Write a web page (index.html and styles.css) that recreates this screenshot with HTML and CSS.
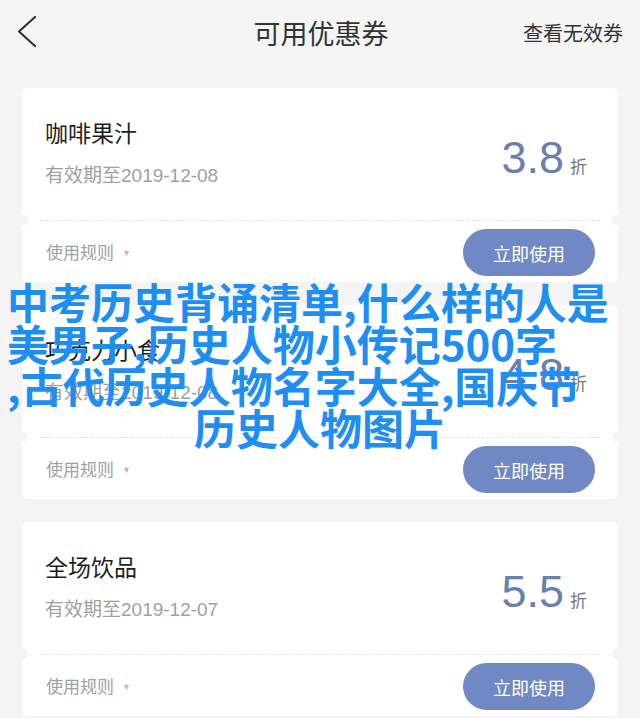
FILE: index.html
```html
<!DOCTYPE html>
<html lang="zh-CN">
<head>
  <meta charset="UTF-8" />
  <meta name="viewport" content="width=device-width, initial-scale=1.0"/>
  <title>可用优惠券</title>
  <link rel="stylesheet" href="styles.css">
</head>
<body>
  <header class="topbar">
    <a class="back" href="#">
      <svg width="20" height="32" viewBox="0 0 20 32"><polyline points="18,1 2,15.5 18,30" fill="none" stroke="#333" stroke-width="2.2" stroke-linecap="round" stroke-linejoin="round"/></svg>
    </a>
    <h1 class="title">可用优惠券</h1>
    <a class="invalid" href="#">查看无效券</a>
  </header>

  <main class="coupons">
    <div class="coupon">
      <div class="coupon-top">
        <div class="coupon-info">
          <h2 class="coupon-name">咖啡果汁</h2>
          <p class="coupon-date">有效期至2019-12-08</p>
        </div>
        <div class="coupon-rate"><span class="rate-num">3.8</span><span class="rate-unit">折</span></div>
      </div>
      <div class="coupon-line"></div>
      <div class="coupon-bottom">
        <span class="rule">使用规则<i class="arrow">▼</i></span>
        <button class="use-btn">立即使用</button>
      </div>
    </div>

    <div class="coupon">
      <div class="coupon-top">
        <div class="coupon-info">
          <h2 class="coupon-name">巧克力小食</h2>
          <p class="coupon-date">有效期至2019-12-08</p>
        </div>
        <div class="coupon-rate"><span class="rate-num">4.8</span><span class="rate-unit">折</span></div>
      </div>
      <div class="coupon-line"></div>
      <div class="coupon-bottom">
        <span class="rule">使用规则<i class="arrow">▼</i></span>
        <button class="use-btn">立即使用</button>
      </div>
    </div>

    <div class="coupon">
      <div class="coupon-top">
        <div class="coupon-info">
          <h2 class="coupon-name">全场饮品</h2>
          <p class="coupon-date">有效期至2019-12-07</p>
        </div>
        <div class="coupon-rate"><span class="rate-num">5.5</span><span class="rate-unit">折</span></div>
      </div>
      <div class="coupon-line"></div>
      <div class="coupon-bottom">
        <span class="rule">使用规则<i class="arrow">▼</i></span>
        <button class="use-btn">立即使用</button>
      </div>
    </div>
  </main>

  <div class="watermark">
    <div class="wm-line">中考历史背诵清单,什么样的人是</div>
    <div class="wm-line">美男子,历史人物小传记500字</div>
    <div class="wm-line">,古代历史人物名字大全,国庆节</div>
    <div class="wm-line wm-center">历史人物图片</div>
  </div>
</body>
</html>
```

FILE: styles.css
```css
* {margin: 0; padding: 0; box-sizing: border-box;}
body {
  background: #f4f4f4;
  font-family: "Liberation Sans", "Noto Sans CJK SC", sans-serif;
  color: #333;
  position: relative;
  min-height: 718px;
}
.topbar {
  height: 64px;
  padding: 0 17px 0 17px;
  display: grid;
  grid-template-columns: 1fr auto 1fr;
  align-items: center;
}
.back {
  display: flex;
  align-items: center;
}
.title {
  font-size: 27px;
  font-weight: normal;
  color: #333;
  padding-left: 2px;
}
.invalid {
  justify-self: end;
  font-size: 20px;
  color: #333;
  text-decoration: none;
}
.coupons {
  padding: 24px 22px 0;
  display: flex;
  flex-direction: column;
  gap: 23px;
}
.coupon {
  background: #fff;
  border-radius: 6px;
}
.coupon-top {
  height: 132px;
  padding: 0 31px 0 23px;
  display: flex;
  align-items: center;
  justify-content: space-between;
}
.coupon-name {
  font-size: 23px;
  font-weight: normal;
  color: #1e1e1e;
  line-height: 26px;
}
.coupon-date {
  margin-top: 18px;
  font-size: 19px;
  line-height: 22px;
  color: #a0a0a0;
}
.coupon-rate {
  display: flex;
  align-items: baseline;
  line-height: 1;
  margin-top: 6px;
}
.rate-num {
  font-size: 45px;
  color: #6b7fac;
}
.rate-unit {
  font-size: 17px;
  color: #777;
  margin-left: 6px;
}
.coupon-line {
  position: relative;
  margin: 0 18px;
  border-top: 1px dashed #e2e2e2;
}
.coupon-line::before,
.coupon-line::after {
  content: "";
  position: absolute;
  top: -7px;
  width: 12px;
  height: 12px;
  border-radius: 50%;
  background: #f4f4f4;
}
.coupon-line::before {left: -24px;}
.coupon-line::after {right: -24px;}
.coupon-bottom {
  height: 61px;
  padding: 0 23px 0 24px;
  display: flex;
  align-items: center;
  justify-content: space-between;
}
.rule {
  font-size: 17px;
  color: #a0a0a0;
}
.arrow {
  font-style: normal;
  font-size: 9px;
  color: #bbb;
  margin-left: 8px;
  vertical-align: 3px;
}
.use-btn {
  width: 132px;
  height: 47px;
  border: none;
  border-radius: 24px;
  background: #7088c3;
  color: #fff;
  font-family: inherit;
  font-size: 18px;
  margin-top: 2px;
}
.watermark {
  position: absolute;
  top: 280px;
  left: 0;
  width: 640px;
  font-family: "Noto Sans CJK SC", sans-serif;
  font-weight: 700;
  font-size: 42px;
  line-height: 42px;
  color: #1e8ef2;
  white-space: nowrap;
  pointer-events: none;
}
.wm-line {
  padding-left: 7px;
}
.wm-center {
  padding-left: 0;
  text-align: center;
}
```
